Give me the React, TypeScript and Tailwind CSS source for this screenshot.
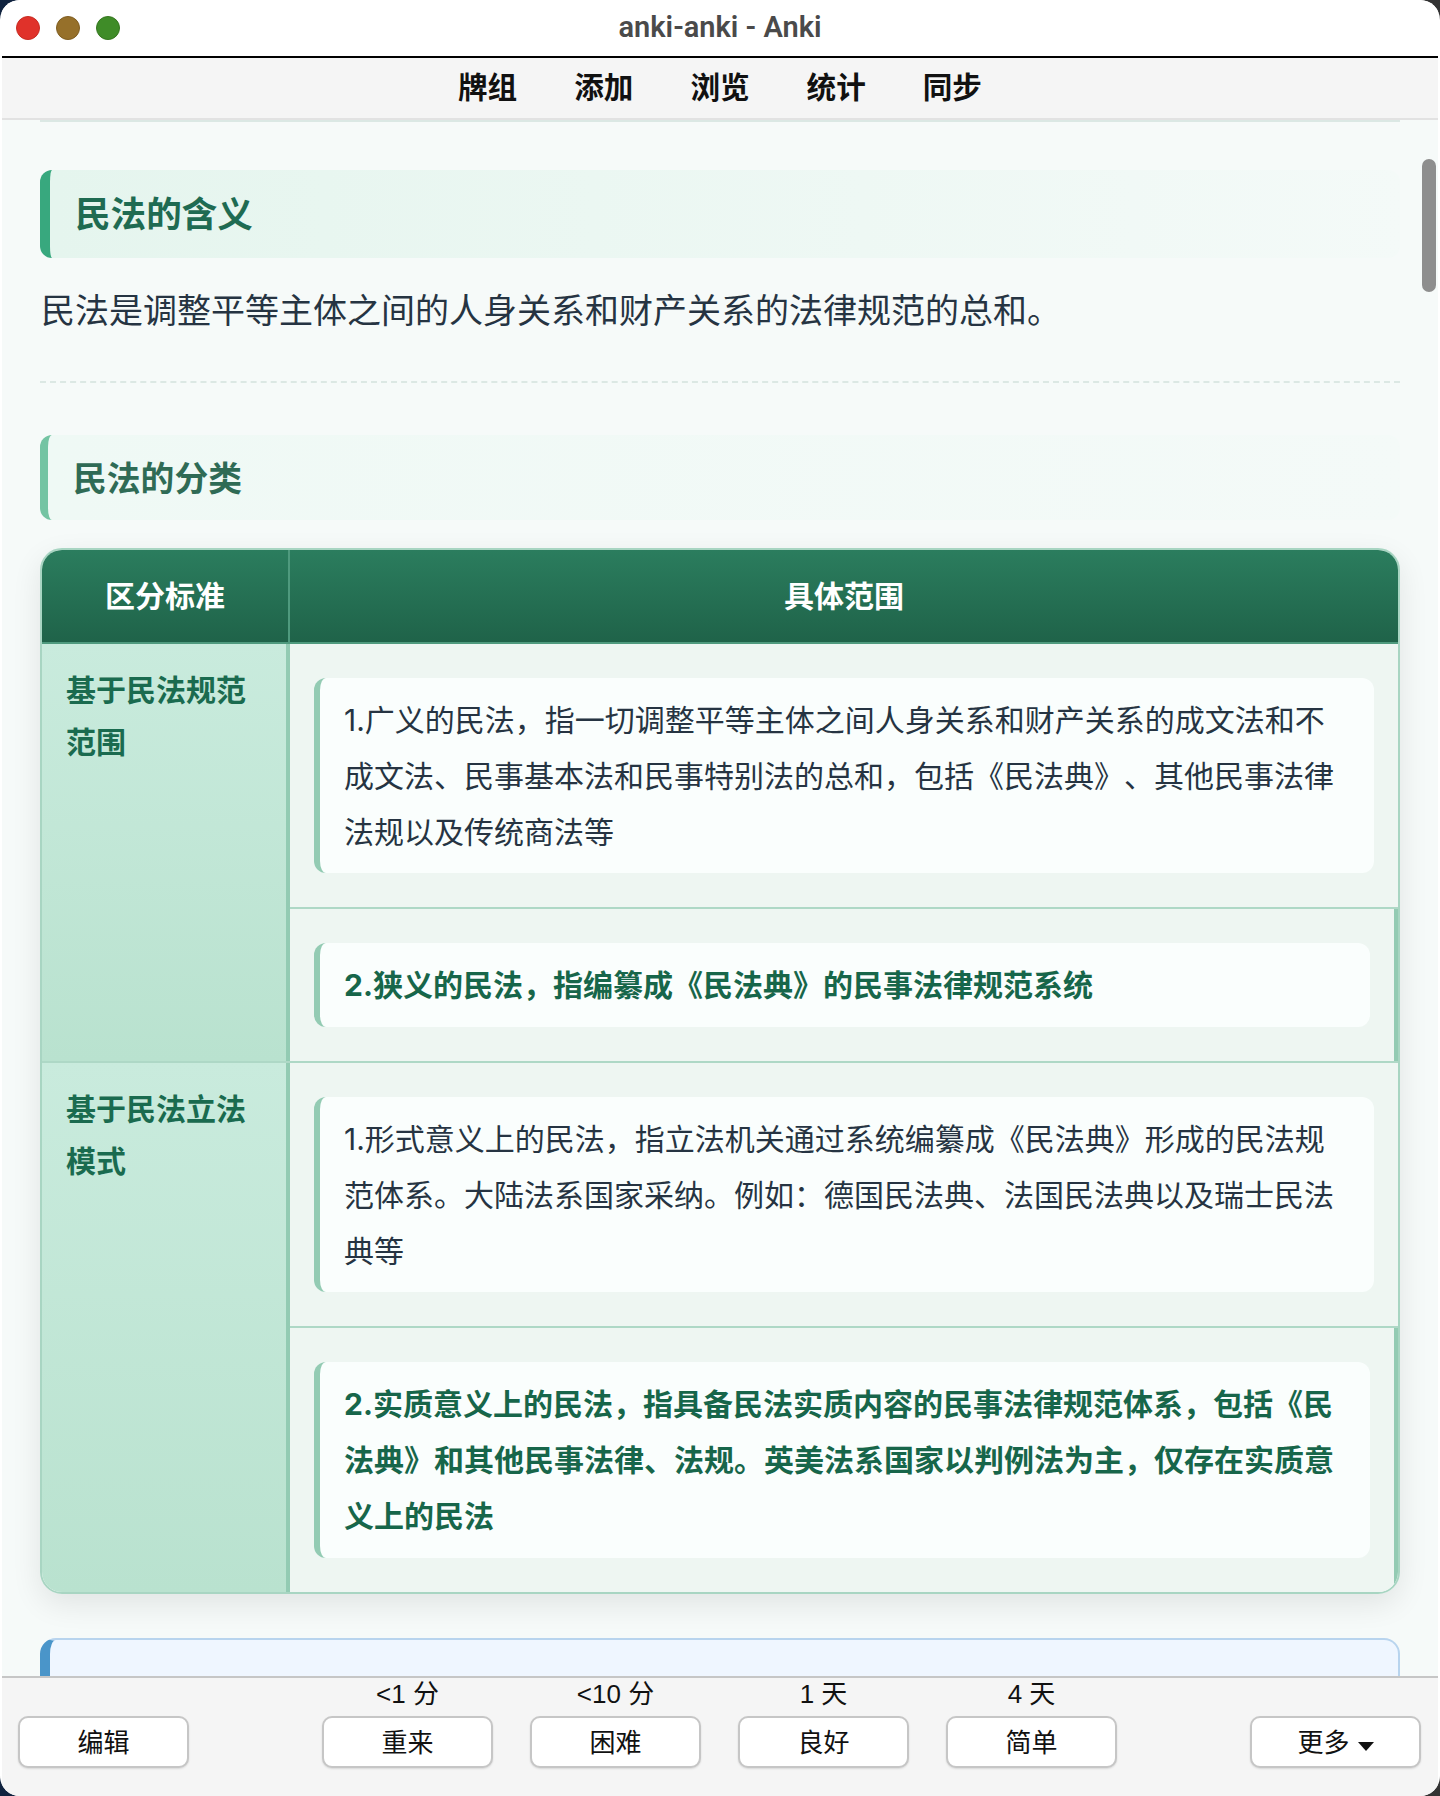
const cjk = "[font-family:'Noto_Sans_CJK_SC',sans-serif]";

const navItems = ["牌组", "添加", "浏览", "统计", "同步"];

const answers = [
  { label: "<1 分", text: "重来" },
  { label: "<10 分", text: "困难" },
  { label: "1 天", text: "良好" },
  { label: "4 天", text: "简单" },
];

function BarButton({ children }: { children: React.ReactNode }) {
  return (
    <button
      type="button"
      className="flex h-[52px] w-[171px] items-center justify-center gap-[8px] rounded-[10px] border-2 border-[#c6c6c6] bg-white pt-[2px] text-[26px] text-[#111] shadow-[0_1px_2px_rgba(0,0,0,0.12)]"
    >
      {children}
    </button>
  );
}

function Card({ bold, children }: { bold?: boolean; children: React.ReactNode }) {
  return (
    <div
      className={
        "rounded-[12px] border-l-[6px] border-[#93cbb3] bg-[#fafefd] pb-[13px] pl-[24px] pr-[26px] pt-[15px] text-[30px] leading-[55.75px] [text-spacing-trim:space-all] [font-family:Inter,'Noto_Sans_CJK_SC',sans-serif] " +
        (bold ? "font-bold text-[#17664a]" : "text-[#263442]")
      }
    >
      {children}
    </div>
  );
}

function Row({ title, first, second }: { title: string; first: string; second: string }) {
  return (
    <div className="flex border-b-2 border-[#aed8c6] last:border-b-0">
      <div className="w-[248px] shrink-0 border-r-4 border-[#93cbb3] bg-gradient-to-b from-[#c9ebdd] to-[#b9e2cf] pl-[24px] pr-[20px] pt-[18px] text-[30px] font-bold leading-[52px] text-[#1a6b4f]">
        {title}
      </div>
      <div className="min-w-0 flex-1 bg-[#eef6f2]">
        <div className="border-b-2 border-[#aed8c6] px-[24px] py-[34px]">
          <Card>{first}</Card>
        </div>
        <div className="border-r-4 border-[#93cbb3] px-[24px] py-[34px]">
          <Card bold>{second}</Card>
        </div>
      </div>
    </div>
  );
}

export default function App() {
  return (
    <div className={"h-[1796px] w-[1440px] overflow-hidden bg-gradient-to-r from-[#10233f] to-[#333] [text-spacing-trim:space-all] " + cjk}>
      <div className="relative flex h-full flex-col overflow-hidden rounded-[20px] bg-white px-[2px]">
        <header className="relative flex h-[58px] shrink-0 items-center justify-center border-b-2 border-black bg-white">
          <div className="absolute left-[14px] top-[16px] flex gap-[16px]">
            <span className="h-[24px] w-[24px] rounded-full border border-[#c72c22] bg-[#e0322a]" />
            <span className="h-[24px] w-[24px] rounded-full border border-[#7f5d20] bg-[#96702a]" />
            <span className="h-[24px] w-[24px] rounded-full border border-[#35761f] bg-[#3f8c28]" />
          </div>
          <span className="text-[29px] font-semibold text-[#4a4a4a] [font-family:Roboto,sans-serif]">anki-anki - Anki</span>
        </header>

        <nav className="flex h-[62px] shrink-0 items-center justify-center gap-[57px] border-b-2 border-[#e2e2e2] bg-[#f5f5f5] pb-[4px]">
          {navItems.map((item) => (
            <span key={item} className="text-[29.6px] font-bold text-[#111]">
              {item}
            </span>
          ))}
        </nav>

        <main className="relative min-h-0 flex-1 overflow-hidden bg-[#f6faf9] px-[38px]">
          <div className="h-[2px] bg-[#dbe8e4]" />

          <h1 className="mt-[48px] flex h-[88px] items-center rounded-[12px] border-l-[10px] border-[#38a87e] bg-gradient-to-r from-[#e5f5ee] to-[#f4faf8] pb-[5px] pl-[25px] text-[35.6px] font-bold text-[#1f6b52]">
            民法的含义
          </h1>
          <p className="mt-[23px] h-[56px] pl-[1px] text-[34px] leading-[56px] text-[#263442]">民法是调整平等主体之间的人身关系和财产关系的法律规范的总和。</p>
          <div className="mt-[44px] border-t-2 border-dashed border-[#dce8e4]" />

          <h2 className="mt-[52px] flex h-[85px] items-center rounded-[12px] border-l-[8px] border-[#74c4a3] bg-gradient-to-r from-[#eff9f5] to-[#f4faf8] pb-[1px] pl-[25px] text-[33.8px] font-bold text-[#2f6b55]">
            民法的分类
          </h2>

          <div className="mt-[28px] overflow-hidden rounded-[22px] border-2 border-[#a8d5c2] shadow-[0_10px_30px_rgba(0,0,0,0.09)]">
            <div className="flex h-[94px] border-b-2 border-[#4f9a7e] bg-gradient-to-b from-[#2b7d5e] to-[#1f6349] pb-[4px] text-[30px] font-bold text-white">
              <div className="-mb-[4px] flex w-[248px] shrink-0 items-center justify-center border-r-2 border-[#4f9a7e] pb-[4px]">区分标准</div>
              <div className="flex flex-1 items-center justify-center">具体范围</div>
            </div>
            <Row
              title="基于民法规范范围"
              first="1.广义的民法，指一切调整平等主体之间人身关系和财产关系的成文法和不成文法、民事基本法和民事特别法的总和，包括《民法典》、其他民事法律法规以及传统商法等"
              second="2.狭义的民法，指编纂成《民法典》的民事法律规范系统"
            />
            <Row
              title="基于民法立法模式"
              first="1.形式意义上的民法，指立法机关通过系统编纂成《民法典》形成的民法规范体系。大陆法系国家采纳。例如：德国民法典、法国民法典以及瑞士民法典等"
              second="2.实质意义上的民法，指具备民法实质内容的民事法律规范体系，包括《民法典》和其他民事法律、法规。英美法系国家以判例法为主，仅存在实质意义上的民法"
            />
          </div>

          <div className="mt-[44px] h-[120px] rounded-[16px] border-2 border-l-[10px] border-[#b8d4ee] border-l-[#4a95c9] bg-[#eff6ff]" />

          <div className="absolute right-[2px] top-[39px] h-[133px] w-[14px] rounded-full bg-[#8e8e8e]" />
        </main>

        <footer className="flex h-[120px] shrink-0 items-start justify-between border-t-2 border-[#c6c6c6] bg-[#f5f5f5] pl-[16px] pr-[17px] text-[#111] [font-family:'Liberation_Sans','Noto_Sans_CJK_SC',sans-serif]">
          <div className="pt-[38px]">
            <BarButton>编辑</BarButton>
          </div>
          <div className="flex gap-[37px]">
            {answers.map((answer) => (
              <div key={answer.text} className="flex flex-col items-center">
                <span className="mb-[6px] h-[32px] text-[26px] leading-[32px]">{answer.label}</span>
                <BarButton>{answer.text}</BarButton>
              </div>
            ))}
          </div>
          <div className="pt-[38px]">
            <BarButton>
              更多
              <svg width="16" height="9" viewBox="0 0 16 9" className="mt-[6px]">
                <polygon points="0,0 16,0 8,9" fill="#111" />
              </svg>
            </BarButton>
          </div>
        </footer>
      </div>
    </div>
  );
}
